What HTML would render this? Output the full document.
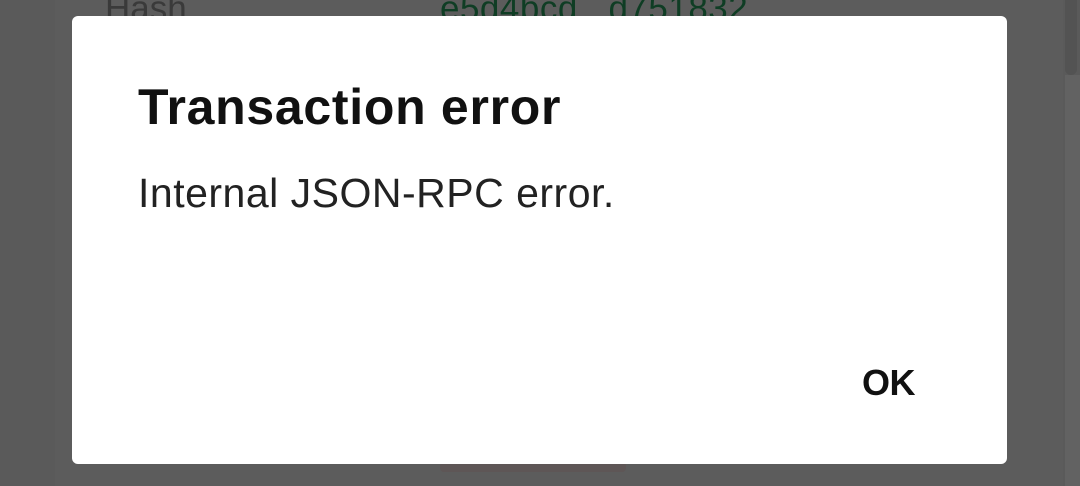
<!DOCTYPE html>
<html><head><style>
html,body{margin:0;padding:0;}
body{width:1080px;height:486px;overflow:hidden;position:relative;background:#5a5a5a;font-family:"Liberation Sans",sans-serif;}
.card{position:absolute;left:55px;top:0;width:1008px;height:486px;background:#5c5c5c;}
.sb{position:absolute;left:1065px;top:0;width:12px;height:75px;background:#535353;border-radius:0 0 6px 6px;}
.sb2{position:absolute;left:1065px;top:75px;width:15px;height:411px;background:#626262;}
.bg1{position:absolute;left:105px;top:-11px;font-size:35px;color:#3a3a3a;}
.bg2{position:absolute;left:440px;top:-11px;font-size:35px;color:#0f3d24;letter-spacing:0.5px;}
.btnbg{position:absolute;left:440px;top:462px;width:186px;height:10px;background:#5e5656;border-radius:4px;}
.dlg{position:absolute;left:72px;top:16px;width:935px;height:448px;background:#fff;border-radius:6px;}
.t{position:absolute;left:66px;top:62px;font-size:50px;font-weight:bold;color:#111;letter-spacing:0.7px;}
.m{position:absolute;left:66px;top:154px;font-size:41px;color:#222;letter-spacing:0.5px;}
.ok{position:absolute;left:790px;top:346px;font-size:36px;font-weight:bold;color:#111;letter-spacing:-0.5px;}
</style></head><body>
<div class="card"></div>
<div class="sb"></div><div class="sb2"></div>
<div class="bg1">Hash</div>
<div class="bg2">e5d4bcd...d751832</div>
<div class="btnbg"></div>
<div class="dlg">
<div class="t">Transaction error</div>
<div class="m">Internal JSON-RPC error.</div>
<div class="ok">OK</div>
</div>
</body></html>
